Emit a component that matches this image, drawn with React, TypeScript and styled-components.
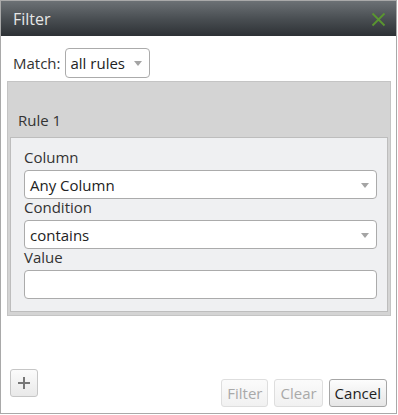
import React from 'react';
import styled, { createGlobalStyle } from 'styled-components';

const GlobalStyle = createGlobalStyle`
  html, body {
    margin: 0;
    padding: 0;
    background: #ffffff;
  }
  body {
    font-family: 'Open Sans', 'Liberation Sans', sans-serif;
    font-size: 15px;
    color: #333333;
  }
`;

const Dialog = styled.div`
  box-sizing: border-box;
  width: 397px;
  height: 414px;
  display: flex;
  flex-direction: column;
  border: 1px solid #a9a9a9;
  background: #ffffff;
`;

const TitleBar = styled.header`
  height: 35px;
  display: flex;
  align-items: center;
  justify-content: space-between;
  padding: 0 10px 0 12px;
  background: linear-gradient(to bottom, #6c7175 0%, #4a4f53 50%, #2d3135 100%);
  color: #e6e6e6;
  font-size: 16px;
`;

const Close = styled.svg`
  width: 15px;
  height: 15px;
  margin-top: 2px;
`;

const Body = styled.section`
  flex: 1;
  display: flex;
  flex-direction: column;
  padding: 12px 5px 0 6px;
`;

const MatchRow = styled.div`
  display: flex;
  align-items: center;
  gap: 4px;
  padding-left: 6px;
`;

const SmallSelect = styled.div`
  box-sizing: border-box;
  width: 85px;
  height: 30px;
  display: flex;
  align-items: center;
  justify-content: space-between;
  padding: 0 7px 0 5px;
  border: 1px solid #ababab;
  border-radius: 4px;
  color: #222222;
`;

const Arrow = styled.span`
  width: 0;
  height: 0;
  border-left: 4px solid transparent;
  border-right: 4px solid transparent;
  border-top: 5px solid #a4a4a4;
  margin-top: 1px;
`;

const Panel = styled.div`
  margin-top: 3px;
  border: 1px solid #c4c4c4;
  background: #d4d4d4;
  padding: 0 2px 3px 2px;
`;

const PanelHeader = styled.div`
  padding: 28px 8px 7px;
  line-height: 20px;
`;

const RuleBox = styled.div`
  border: 1px solid #bdbdbd;
  background: #eff0f2;
  padding: 11px 10px 12px 13px;
  display: flex;
  flex-direction: column;
`;

const Label = styled.label`
  line-height: 16px;
  margin-bottom: 5px;
`;

const Field = styled.div`
  box-sizing: border-box;
  height: 29px;
  display: flex;
  align-items: center;
  justify-content: space-between;
  padding: 0 7px 0 5px;
  border: 1px solid #ababab;
  border-radius: 4px;
  background: #ffffff;
  color: #222222;
`;

const Footer = styled.footer`
  display: flex;
  align-items: flex-end;
  justify-content: space-between;
  padding: 0 9px 6px 9px;
`;

const AddButton = styled.button`
  box-sizing: border-box;
  width: 28px;
  height: 28px;
  margin-bottom: 10px;
  padding: 0;
  display: flex;
  align-items: center;
  justify-content: center;
  border: 1px solid #c6c6c6;
  border-radius: 3px;
  background: linear-gradient(to bottom, #fbfbfb, #e9e9e9);
`;

const Actions = styled.div`
  display: flex;
  gap: 6px;
`;

const Button = styled.button<{ $disabled?: boolean }>`
  box-sizing: border-box;
  height: 28px;
  padding: 0 5px;
  font-family: 'Open Sans', 'Liberation Sans', sans-serif;
  font-size: 15px;
  border-radius: 3px;
  border: 1px solid ${(p) => (p.$disabled ? '#dedede' : '#a6a6a6')};
  color: ${(p) => (p.$disabled ? '#a9a9a9' : '#1e1e1e')};
  background: ${(p) =>
    p.$disabled
      ? 'linear-gradient(to bottom, #fbfbfb, #f1f1f1)'
      : 'linear-gradient(to bottom, #fdfdfd, #e6e6e6)'};
`;

function App(): JSX.Element {
  return (
    <>
      <GlobalStyle />
      <Dialog>
        <TitleBar>
          <span>Filter</span>
          <Close viewBox="0 0 15 15">
            <path d="M1.5 1.5 L13.5 13.5 M13.5 1.5 L1.5 13.5" stroke="#5a9630" strokeWidth="1.8" fill="none" />
          </Close>
        </TitleBar>
        <Body>
          <MatchRow>
            <span>Match:</span>
            <SmallSelect>
              <span>all rules</span>
              <Arrow />
            </SmallSelect>
          </MatchRow>
          <Panel>
            <PanelHeader>Rule 1</PanelHeader>
            <RuleBox>
              <Label>Column</Label>
              <Field>
                <span>Any Column</span>
                <Arrow />
              </Field>
              <Label>Condition</Label>
              <Field>
                <span>contains</span>
                <Arrow />
              </Field>
              <Label>Value</Label>
              <Field />
            </RuleBox>
          </Panel>
        </Body>
        <Footer>
          <AddButton>
            <svg width="14" height="14" viewBox="0 0 14 14">
              <path d="M7 1 V13 M1 7 H13" stroke="#777777" strokeWidth="2" fill="none" />
            </svg>
          </AddButton>
          <Actions>
            <Button $disabled>Filter</Button>
            <Button $disabled>Clear</Button>
            <Button>Cancel</Button>
          </Actions>
        </Footer>
      </Dialog>
    </>
  );
}

export default App;
